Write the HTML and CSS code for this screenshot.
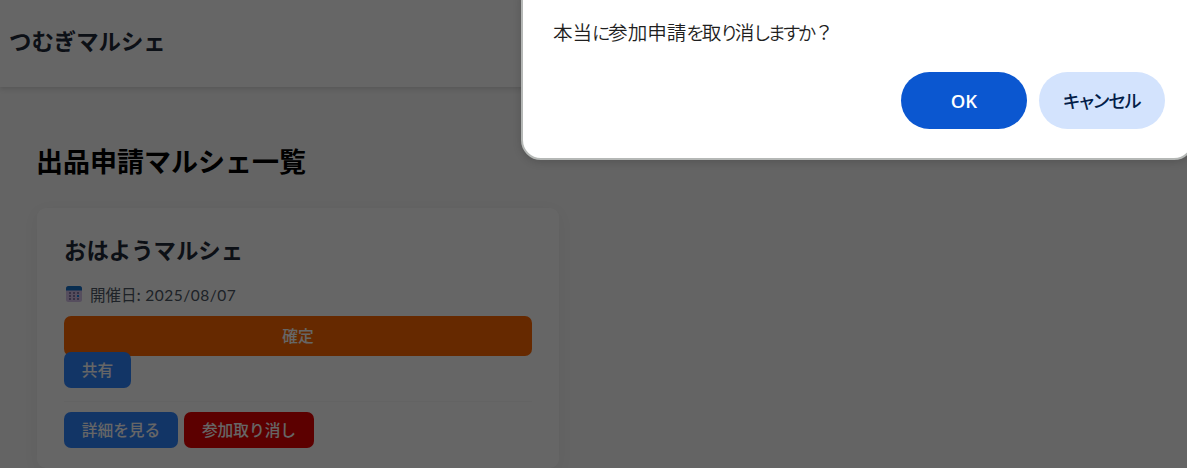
FILE: index.html
```
<!DOCTYPE html>
<html lang="ja">
<head>
<meta charset="utf-8">
<title>つむぎマルシェ</title>
<link rel="stylesheet" href="styles.css">
</head>
<body>
<header class="site-header"><div class="brand">つむぎマルシェ</div></header>
<main class="content">
  <h1 class="page-title">出品申請マルシェ一覧</h1>
  <article class="card">
    <h2 class="card-title">おはようマルシェ</h2>
    <p class="date">
      <svg class="calendar" viewBox="0 0 18 18" aria-hidden="true">
        <rect x="1" y="1" width="16" height="16" rx="2.5" fill="#d6c3ea"/>
        <path d="M1 5.500V3.500Q1 1 3.500 1h11Q17 1 17 3.500v2z" fill="#1672c8"/>
        <g fill="#8b7baa">
          <rect x="4" y="7" width="2" height="2"/><rect x="8" y="7" width="2" height="2"/><rect x="12" y="7" width="2" height="2"/>
          <rect x="4" y="10" width="2" height="2"/><rect x="8" y="10" width="2" height="2"/>
          <rect x="4" y="13" width="2" height="2"/><rect x="8" y="13" width="2" height="2"/><rect x="12" y="13" width="2" height="2"/>
        </g>
        <rect x="12" y="10" width="2" height="2" fill="#1685e5"/>
      </svg>
      <span>開催日: <span class="date-value">2025/08/07</span></span>
    </p>
    <div class="status">確定</div>
    <button class="btn share">共有</button>
    <div class="actions">
      <button class="btn detail">詳細を見る</button>
      <button class="btn cancel">参加取り消し</button>
    </div>
  </article>
</main>
<div class="overlay"></div>
<div class="dialog" role="dialog">
  <p class="message">本当<span class="kana">に</span>参加申請<span class="kana">を</span>取<span class="kana">り</span>消<span class="kana">しますか</span><span class="mark">？</span></p>
  <div class="dialog-actions">
    <button class="pill primary">OK</button>
    <button class="pill secondary"><span class="pill-label">キャンセル</span></button>
  </div>
</div>
</body>
</html>
```
FILE: styles.css
```
* { box-sizing: border-box; }
body {
  margin: 0;
  height: 468px;
  overflow: hidden;
  background: #f9f9f9;
  font-family: "Noto Sans CJK JP", sans-serif;
}
button { border: 0; font-family: inherit; white-space: nowrap; }
.site-header {
  height: 87px;
  padding: 0 9px 8px;
  display: flex;
  align-items: center;
  background: #fff;
  box-shadow: 0 2px 5px rgba(0, 0, 0, .14);
}
.brand { font-size: 22.4px; font-weight: 700; color: #1f2937; }
.content { padding: 54px 37px 0; }
.page-title { margin: 0 0 0 -1px; font-size: 27px; line-height: 40px; font-weight: 700; color: #000; }
.card {
  width: 522px;
  height: 260px;
  margin-top: 27px;
  padding: 25px 27px 0;
  border-radius: 9px;
  background: #fff;
  box-shadow: 0 4px 16px rgba(0, 0, 0, .05);
}
.card-title { margin: 0; font-size: 22.4px; line-height: 32px; color: #1f2937; }
.date {
  display: flex;
  align-items: center;
  gap: 7px;
  height: 24px;
  margin: 17px 0 10px;
  padding-left: 1px;
  font-size: 15.5px;
  color: #4b5563;
}
.date-value { margin-left: 1px; font-family: Lato, sans-serif; font-size: 15.5px; letter-spacing: .5px; }
.calendar { width: 18px; height: 18px; }
.status {
  height: 40px;
  border-radius: 7px;
  background: #ff6800;
  color: #fff;
  font-size: 15.7px;
  line-height: 40px;
  font-weight: 500;
  text-align: center;
}
.btn {
  height: 36px;
  padding: 0 0 2px;
  border-radius: 7px;
  background: #2f84ff;
  color: #fff;
  font-size: 15.7px;
  font-weight: 500;
}
.share { display: block; position: relative; width: 67px; margin-top: -4px; }
.actions {
  display: flex;
  gap: 6px;
  margin-top: 13px;
  padding-top: 10px;
  border-top: 1px solid #f8f8f8;
}
.detail { width: 114px; }
.cancel { width: 130px; background: #e60000; }
.overlay { position: absolute; inset: 0; background: rgba(0, 0, 0, .6); }
.dialog {
  position: absolute;
  top: -20px;
  left: 521px;
  width: 673px;
  height: 180px;
  padding: 35px 28px 0 30px;
  border: 2px solid #b5b8b6;
  border-radius: 20px;
  background: #fff;
  box-shadow: 0 2px 8px rgba(0, 0, 0, .16);
}
.message {
  margin: 0;
  font-size: 19.6px;
  line-height: 30px;
  height: 30px;
  font-weight: 350;
  font-feature-settings: "palt";
  color: #1f1f1f;
  white-space: nowrap;
}
.kana { font-size: 18.6px; letter-spacing: -2px; }
.mark { margin-left: 3px; }
.dialog-actions { display: flex; justify-content: flex-end; gap: 12px; margin-top: 25px; margin-right: -1px; }
.pill { width: 126px; height: 57px; padding: 0; border-radius: 29px; font-size: 18px; font-weight: 500; }
.primary { background: #0b57d0; color: #fff; font-family: "Open Sans", sans-serif; font-weight: 600; font-size: 18.5px; }
.secondary { padding-bottom: 2px; background: #d3e3fd; color: #041e49; }
.pill-label { font-feature-settings: "palt"; letter-spacing: -.8px; }
```
